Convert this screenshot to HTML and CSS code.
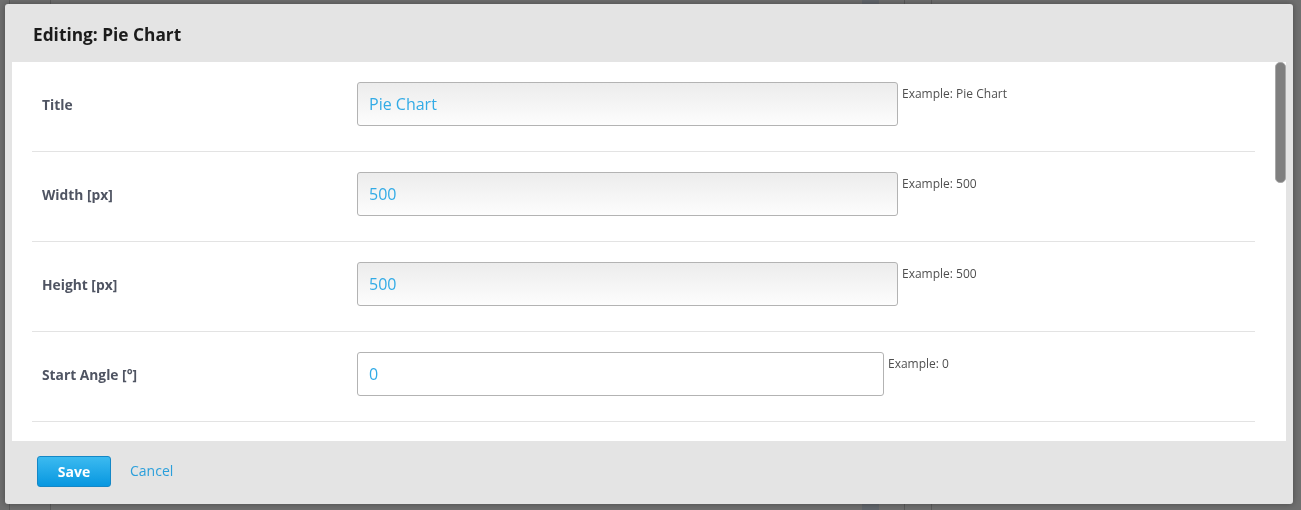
FILE: index.html
```html
<!DOCTYPE html>
<html>
<head>
<meta charset="utf-8">
<title>Editing: Pie Chart</title>
<link rel="stylesheet" href="styles.css">
</head>
<body>
<div class="modal">
  <div class="modal-header">
    <h1 class="modal-title">Editing: Pie Chart</h1>
  </div>
  <div class="modal-body">
    <div class="form">
      <div class="row">
        <label class="label">Title</label>
        <div class="field">
          <input class="input" type="text" value="Pie Chart">
          <span class="hint">Example: Pie Chart</span>
        </div>
      </div>
      <div class="row">
        <label class="label">Width [px]</label>
        <div class="field">
          <input class="input" type="text" value="500">
          <span class="hint">Example: 500</span>
        </div>
      </div>
      <div class="row">
        <label class="label">Height [px]</label>
        <div class="field">
          <input class="input" type="text" value="500">
          <span class="hint">Example: 500</span>
        </div>
      </div>
      <div class="row">
        <label class="label">Start Angle [°]</label>
        <div class="field">
          <input class="input input-plain" type="text" value="0">
          <span class="hint">Example: 0</span>
        </div>
      </div>
      <div class="row"></div>
    </div>
    <div class="scrollbar"><div class="thumb"></div></div>
  </div>
  <div class="modal-footer">
    <button class="btn-save">Save</button>
    <a class="btn-cancel" href="#">Cancel</a>
  </div>
</div>
</body>
</html>
```
FILE: styles.css
```css
html, body {
  margin: 0;
  padding: 0;
}
body {
  width: 1301px;
  height: 510px;
  overflow: hidden;
  font-family: "Open Sans", "Noto Sans", sans-serif;
  background-color: #6f6f6f;
  background-image:
    linear-gradient(to right,
      transparent 9px, #5c5c5c 9px, #5c5c5c 10px, transparent 10px,
      transparent 50px, #5c5c5c 50px, #5c5c5c 51px, transparent 51px,
      transparent 862px, #62666c 862px, #62666c 879px, transparent 879px,
      transparent 904px, #5a5a5a 904px, #5a5a5a 905px, transparent 905px,
      transparent 931px, #5c5c5c 931px, #5c5c5c 932px, transparent 932px);
}
.modal {
  position: fixed;
  left: 5px;
  top: 4px;
  width: 1288px;
  height: 500px;
  background: #e4e4e4;
  border-radius: 3px;
  box-shadow: 0 0 6px rgba(0, 0, 0, 0.35);
  display: flex;
  flex-direction: column;
}
.modal-header {
  height: 58px;
  box-sizing: border-box;
  display: flex;
  align-items: center;
  padding-left: 28px;
  padding-top: 3px;
  flex: none;
}
.modal-title {
  margin: 0;
  font-size: 17.3px;
  font-weight: 700;
  color: #1b1b1b;
}
.modal-body {
  height: 379px;
  margin: 0 7px;
  background: #fff;
  display: flex;
  flex: none;
}
.form {
  flex: 1;
  overflow: hidden;
  padding: 0 20px;
}
.row {
  display: flex;
  align-items: flex-start;
  height: 89px;
  box-sizing: content-box;
  padding: 0 0 0 10px;
  border-bottom: 1px solid #e3e3e3;
}
.label {
  width: 315px;
  flex: none;
  margin-top: 21px;
  line-height: 44px;
  font-size: 13.8px;
  font-weight: 700;
  color: #4f5462;
}
.field {
  display: flex;
  align-items: flex-start;
  margin-top: 20px;
}
.input {
  width: 541px;
  height: 44px;
  box-sizing: border-box;
  border: 1px solid #b3b3b3;
  border-radius: 3px;
  padding: 0 11px;
  font-family: "Open Sans", "Noto Sans", sans-serif;
  font-size: 16px;
  color: #32abe6;
  background: linear-gradient(to bottom, #ececec, #fdfdfd);
  outline: none;
}
.input-plain {
  width: 527px;
  background: #fff;
}
.hint {
  margin-left: 4px;
  margin-top: 4px;
  font-size: 12px;
  line-height: 16px;
  color: #4f4f4f;
}
.scrollbar {
  width: 11px;
  flex: none;
  background: #fff;
}
.thumb {
  height: 121px;
  box-sizing: border-box;
  background: #7f7f7f;
  border: 1px solid #a8a8a8;
  border-radius: 5px;
}
.modal-footer {
  flex: 1;
  display: flex;
  align-items: flex-start;
  padding-left: 32px;
  padding-top: 15px;
}
.btn-save {
  width: 74px;
  height: 31px;
  box-sizing: border-box;
  border: 1px solid #1487c6;
  border-radius: 3px;
  background: linear-gradient(to bottom, #3cbaf0, #0797e0);
  color: #fff;
  font-family: "Open Sans", "Noto Sans", sans-serif;
  font-size: 14px;
  font-weight: 700;
  padding: 0 0 1px;
  cursor: pointer;
}
.btn-cancel {
  margin-left: 19px;
  font-size: 14px;
  line-height: 30px;
  color: #2b9fdb;
  text-decoration: none;
}
```
